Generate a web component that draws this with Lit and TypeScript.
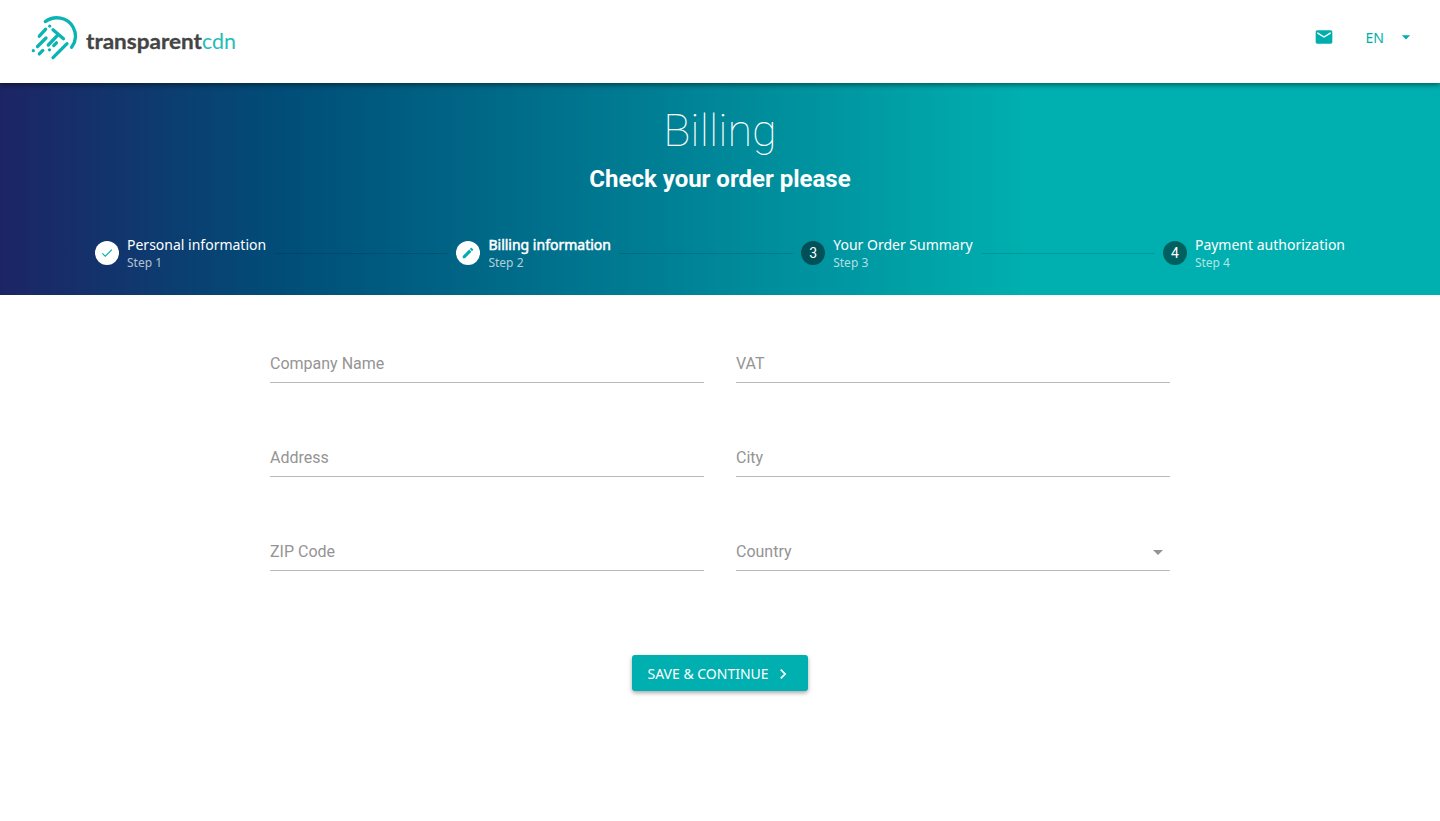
import { LitElement, html, css, svg } from "lit";
import { customElement, property } from "lit/decorators.js";
import { classMap } from "lit/directives/class-map.js";

const icons = {
  mail: svg`<path d="M20 4H4c-1.1 0-1.99.9-1.99 2L2 18c0 1.1.9 2 2 2h16c1.1 0 2-.9 2-2V6c0-1.100-.9-2-2-2zm0 4l-8 5-8-5V6l8 5 8-5v2z"/>`,
  down: svg`<path d="M7 10l5 5 5-5z"/>`,
  check: svg`<path d="M9 16.170L4.830 12l-1.420 1.410L9 19 21 7l-1.410-1.410z"/>`,
  edit: svg`<path d="M3 17.250V21h3.750L17.810 9.940l-3.750-3.750L3 17.250zM20.710 7.040c.39-.39.39-1.020 0-1.410l-2.340-2.340c-.39-.39-1.020-.39-1.410 0l-1.830 1.830 3.750 3.750 1.830-1.830z"/>`,
  right: svg`<path d="M10 6L8.590 7.410 13.170 12l-4.580 4.590L10 18l6-6z"/>`,
};

const icon = (name: keyof typeof icons, size: number) =>
  html`<svg class="icon" width=${size} height=${size} viewBox="0 0 24 24">${icons[name]}</svg>`;

@customElement("brand-logo")
export class BrandLogo extends LitElement {
  static styles = css`
    :host { display: block; height: 50px; }
    .art { display: block; }
    .mark { fill: none; stroke: #0bb3b3; stroke-width: 3.3; stroke-linecap: round; stroke-linejoin: round; }
    .name { font: 700 21.5px "Lato", sans-serif; fill: #444; stroke: #444; stroke-width: .3; }
    .suffix { font: 400 21.500px "Lato", sans-serif; fill: #1fbcbc; }
  `;
  render() {
    return html`<svg class="art" width="210" height="50" viewBox="30 12 210 50">
      <g class="mark">
        <path d="M45.300 21.600C54.500 14.900 67.500 17.200 73 27C76.700 33.600 76.200 41 71.600 47.300"/>
        <path d="M49.700 26.100h.01M45.700 29.200L39.300 36.200M53 29.800L63.500 38.800M58 34.800L48.300 45M46 38L37.500 46.500M33.300 50.700h.01M42.800 50.400L39.300 53.900M56.500 42.800L53.800 45.500M49.500 49.800h.01M67 43.700L53 57.700"/>
      </g>
      <text class="name" x="86" y="48.500" textLength="116" lengthAdjust="spacingAndGlyphs">transparent</text>
      <text class="suffix" x="202" y="48.500" textLength="34" lengthAdjust="spacingAndGlyphs">cdn</text>
    </svg>`;
  }
}

@customElement("top-bar")
export class TopBar extends LitElement {
  static styles = css`
    :host { display: flex; justify-content: space-between; box-sizing: border-box; height: 83px; padding: 12px 24px 0 30px; background: #fff; box-shadow: 0 2px 5px rgba(0,0,0,.45); color: #00aeae; z-index: 1; }
    .actions { display: flex; align-items: center; height: 50px; font: 14px/20px "Noto Sans", sans-serif; }
    .icon { fill: currentColor; display: block; }
    .lang { margin: 2px 12px 0 32px; }
  `;
  render() {
    return html`<brand-logo></brand-logo>
      <div class="actions">${icon("mail", 20)}<span class="lang">EN</span>${icon("down", 20)}</div>`;
  }
}

@customElement("step-item")
export class StepItem extends LitElement {
  @property({ type: Number }) number = 1;
  @property() label = "";
  @property() status = "todo";
  static styles = css`
    :host { display: flex; gap: 8px; align-items: center; flex: none; font-family: "Noto Sans", sans-serif; color: #fff; }
    .badge { width: 24px; height: 24px; border-radius: 50%; background: rgba(0,0,0,.45); display: flex; align-items: center; justify-content: center; font: 14px/24px "Roboto", sans-serif; }
    .badge.lit { background: #fff; color: #00aeae; }
    .icon { fill: currentColor; }
    .label { font-size: 14px; line-height: 20px; white-space: nowrap; }
    .label.active { -webkit-text-stroke: .5px #fff; }
    .sub { font-size: 12px; line-height: 16px; color: rgba(255,255,255,.7); }
  `;
  render() {
    const mark = this.status === "done" ? icon("check", 14) : this.status === "active" ? icon("edit", 14) : this.number;
    return html`<div class=${classMap({ badge: true, lit: this.status !== "todo" })}>${mark}</div>
      <div><div class=${classMap({ label: true, active: this.status === "active" })}>${this.label}</div>
      <div class="sub">Step ${this.number}</div></div>`;
  }
}

@customElement("form-field")
export class FormField extends LitElement {
  @property() label = "";
  @property({ type: Boolean }) select = false;
  static styles = css`
    :host { display: flex; align-items: center; justify-content: space-between; height: 37px; border-bottom: 1px solid #b9b9b9; font: 16px/24px "Roboto", sans-serif; color: #949494; }
    .icon { display: block; fill: #949494; }
  `;
  render() {
    return html`<span>${this.label}</span>${this.select ? icon("down", 24) : ""}`;
  }
}

@customElement("app-root")
export class AppRoot extends LitElement {
  static styles = css`
    :host { display: flex; flex-direction: column; min-height: 821px; background: #fff; font-family: "Roboto", sans-serif; }
    .hero { height: 212px; box-sizing: border-box; padding-top: 18px; color: #fff; text-align: center; background: linear-gradient(to right, #1d2465 0%, #004e79 20%, #00afaf 71%); }
    .title { margin: 0; font-size: 45px; line-height: 60px; font-weight: 100; }
    .subtitle { margin: 4px 0 0; font-size: 24px; line-height: 28px; font-weight: 700; }
    .steps { display: flex; align-items: center; margin-top: 42px; padding: 0 95px; text-align: left; }
    .line { flex: 1; height: 1px; background: rgba(0,0,0,.13); margin: 0 8px; }
    .form { width: 900px; margin: 50px auto 0; display: grid; grid-template-columns: 1fr 1fr; column-gap: 32px; row-gap: 56px; }
    .submit { align-self: center; margin-top: 84px; width: 176px; height: 36px; box-sizing: border-box; border: 0; border-radius: 3px; padding: 1px 15px 0 15.500px; display: flex; align-items: center; justify-content: space-between; background: #00afaf; color: #fff; font: 14px/35px "Noto Sans", sans-serif; white-space: nowrap; box-shadow: 0 2px 4px rgba(0,0,0,.35); }
    .submit .icon { fill: #fff; }
  `;
  render() {
    return html`<top-bar></top-bar>
      <section class="hero">
        <h1 class="title">Billing</h1>
        <h2 class="subtitle">Check your order please</h2>
        <div class="steps">
          <step-item number="1" label="Personal information" status="done"></step-item><div class="line"></div>
          <step-item number="2" label="Billing information" status="active"></step-item><div class="line"></div>
          <step-item number="3" label="Your Order Summary"></step-item><div class="line"></div>
          <step-item number="4" label="Payment authorization"></step-item>
        </div>
      </section>
      <div class="form">
        ${["Company Name", "VAT", "Address", "City", "ZIP Code", "Country"].map(
          (l) => html`<form-field label=${l} ?select=${l === "Country"}></form-field>`
        )}
      </div>
      <button class="submit"><span>SAVE &amp; CONTINUE</span>${icon("right", 20)}</button>`;
  }
}
